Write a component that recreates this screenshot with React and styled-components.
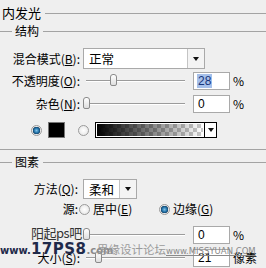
import styled, { createGlobalStyle } from "styled-components";

const Global = createGlobalStyle`
  html, body {
    margin: 0;
    padding: 0;
    background: #efefef;
  }
  body {
    font-family: "Noto Sans CJK SC", "Liberation Sans", sans-serif;
    font-size: 12px;
    color: #000;
  }
`;

const Panel = styled.div`
  position: relative;
  width: 266px;
  height: 268px;
  overflow: hidden;
  background: #efefef;
  display: flex;
  flex-direction: column;
`;

const Header = styled.div`
  display: flex;
  align-items: center;
  height: 14px;
  margin-top: ${(p) => p.$top}px;
  line-height: 14px;
  font-size: ${(p) => p.$size || 12}px;
  &::before {
    content: "";
    width: ${(p) => (p.$indent ? 12 : 0)}px;
    margin-right: ${(p) => (p.$indent ? 3 : 2)}px;
    height: 1px;
    background: #a3a3a3;
  }
  &::after {
    content: "";
    flex: 1;
    height: 1px;
    margin-left: 4px;
    background: #a3a3a3;
  }
`;

const Divider = styled.div`
  height: 1px;
  background: #a3a3a3;
  margin-top: ${(p) => p.$top}px;
`;

const Row = styled.div`
  display: flex;
  align-items: center;
  height: ${(p) => p.$h}px;
  margin-top: ${(p) => p.$top}px;
`;

const Label = styled.div`
  width: ${(p) => p.$w || 80}px;
  margin-right: ${(p) => (p.$gap === undefined ? 3 : p.$gap)}px;
  text-align: right;
  white-space: nowrap;
  line-height: 14px;
  u {
    text-decoration: underline;
  }
`;

const Select = styled.div`
  display: flex;
  width: ${(p) => p.$w}px;
  height: ${(p) => p.$h}px;
  box-sizing: border-box;
  border: 1px solid #a9a9a9;
  background: #fff;
`;

const SelectText = styled.div`
  flex: 1;
  padding-left: 5px;
  display: flex;
  align-items: center;
  font-size: 12.5px;
`;

const SelectArrow = styled.div`
  width: 16px;
  border-left: 1px solid #c4c4c4;
  background: ${(p) => p.$bg || "#f4f4f4"};
  display: flex;
  align-items: center;
  justify-content: center;
  &::after {
    content: "";
    border-left: 3px solid transparent;
    border-right: 3px solid transparent;
    border-top: 4px solid #111;
  }
`;

const Slider = styled.div`
  position: relative;
  width: 104px;
  height: 18px;
  margin-right: 6px;
`;

const Track = styled.div`
  position: absolute;
  left: 3px;
  right: 2px;
  top: 8px;
  height: 1px;
  background: #9b9b9b;
  border-bottom: 1px solid #fff;
`;

const Thumb = styled.div`
  position: absolute;
  top: 2px;
  width: 7px;
  height: 12px;
  box-sizing: border-box;
  border: 1px solid #8a8a8a;
  border-radius: 3px 3px 2px 2px;
  background: linear-gradient(#ffffff, #dedede);
`;

const Field = styled.div`
  width: 37px;
  height: 18px;
  box-sizing: border-box;
  border: 1px solid #a9a9a9;
  background: #fff;
  display: flex;
  align-items: center;
  padding-left: 3px;
  font-family: "Liberation Sans", sans-serif;
  font-size: 12px;
  span {
    background: ${(p) => (p.$selected ? "#a6c0ea" : "transparent")};
    color: ${(p) => (p.$selected ? "#17357a" : "#000")};
    padding: 0 1px;
  }
`;

const Unit = styled.div`
  margin-left: 3px;
  line-height: 14px;
`;

const Radio = styled.div`
  width: 11px;
  height: 11px;
  box-sizing: border-box;
  border-radius: 50%;
  border: 1px solid #9a9a9a;
  background: ${(p) =>
    p.$on
      ? "radial-gradient(circle, #7fc2e8 0, #1f6fa5 2.5px, #16456b 3.5px, #e8e8e8 4px)"
      : "radial-gradient(circle, #ffffff 0, #e2e2e2 100%)"};
  margin-left: ${(p) => p.$left || 0}px;
  flex-shrink: 0;
`;

const Swatch = styled.div`
  width: 17px;
  height: 16px;
  box-sizing: border-box;
  border: 1px solid #777;
  background: #000;
  margin-left: 6px;
`;

const Gradient = styled.div`
  display: flex;
  width: 122px;
  height: 16px;
  box-sizing: border-box;
  border: 1px solid #000;
  margin-left: 6px;
  background: #fff;
`;

const GradientFill = styled.div`
  flex: 1;
  border: 1px solid #fff;
  background:
    linear-gradient(to right, #000, rgba(0, 0, 0, 0)),
    repeating-conic-gradient(#c8c8c8 0 25%, #ffffff 0 50%) 0 0 / 8px 8px;
`;

const GradientArrow = styled(SelectArrow)`
  width: 11px;
  border-left: 1px solid #000;
`;

const RadioText = styled.div`
  margin-left: 3px;
  line-height: 14px;
  width: ${(p) => p.$w || "auto"}px;
`;

const Mark = styled.div`
  position: absolute;
  left: ${(p) => p.$x}px;
  top: ${(p) => p.$y}px;
  white-space: nowrap;
  pointer-events: none;
  line-height: 1;
`;

const MarkPs = styled(Mark)`
  font-size: 13px;
  color: #333;
  letter-spacing: -0.5px;
`;

const MarkSite = styled(Mark)`
  font-family: "DejaVu Sans", sans-serif;
  font-weight: bold;
  color: #1f2a4a;
  font-size: 10px;
  b {
    font-size: 15px;
    letter-spacing: 0.5px;
  }
  i {
    font-style: normal;
    font-size: 10px;
    color: #8a8a8a;
  }
`;

const MarkForum = styled(Mark)`
  color: #9a9a9a;
  font-size: 11.5px;
`;

const MarkMiss = styled(Mark)`
  font-family: "DejaVu Sans", sans-serif;
  color: #8a8a8a;
  font-size: 8.5px;
  text-decoration: underline;
`;

function SliderBox({ value }) {
  return (
    <Slider>
      <Track />
      <Thumb style={{ left: value }} />
    </Slider>
  );
}

export default function App() {
  return (
    <Panel>
      <Global />
      <Header $top={6} $size={13}>
        内发光
      </Header>
      <Header $top={4} $indent>
        结构
      </Header>

      <Row $h={21} $top={10}>
        <Label>
          混合模式(<u>B</u>):
        </Label>
        <Select $w={122} $h={21}>
          <SelectText>正常</SelectText>
          <SelectArrow />
        </Select>
      </Row>

      <Row $h={18} $top={3}>
        <Label>
          不透明度(<u>O</u>):
        </Label>
        <SliderBox value={27} />
        <Field $selected>
          <span>28</span>
        </Field>
        <Unit>%</Unit>
      </Row>

      <Row $h={18} $top={5}>
        <Label>
          杂色(<u>N</u>):
        </Label>
        <SliderBox value={0} />
        <Field>
          <span>0</span>
        </Field>
        <Unit>%</Unit>
      </Row>

      <Row $h={16} $top={9}>
        <Radio $on $left={31} />
        <Swatch />
        <Radio $left={13} />
        <Gradient>
          <GradientFill />
          <GradientArrow $bg="#fff" />
        </Gradient>
      </Row>

      <Divider $top={11} />
      <Header $top={5} $indent>
        图素
      </Header>

      <Row $h={20} $top={10}>
        <Label $w={78} $gap={5}>
          方法(<u>Q</u>):
        </Label>
        <Select $w={54} $h={20}>
          <SelectText>柔和</SelectText>
          <SelectArrow />
        </Select>
      </Row>

      <Row $h={14} $top={3}>
        <Label $w={78} $gap={1}>
          源:
        </Label>
        <Radio />
        <RadioText $w={66}>
          居中(<u>E</u>)
        </RadioText>
        <Radio $on />
        <RadioText>
          边缘(<u>G</u>)
        </RadioText>
      </Row>

      <Row $h={18} $top={10}>
        <Label />
        <SliderBox value={0} />
        <Field>
          <span>0</span>
        </Field>
        <Unit>%</Unit>
      </Row>

      <Row $h={18} $top={5}>
        <Label>
          大小(<u>S</u>):
        </Label>
        <SliderBox value={12} />
        <Field>
          <span>21</span>
        </Field>
        <Unit>像素</Unit>
      </Row>

      <MarkPs $x={31} $y={226}>
        阳起ps吧
      </MarkPs>
      <MarkSite $x={0} $y={242}>
        www.<b>17PS8</b>
        <i>.com</i>
      </MarkSite>
      <MarkForum $x={97} $y={244}>
        思缘设计论坛
      </MarkForum>
      <MarkMiss $x={166} $y={247}>
        www.MISSYUAN.COM
      </MarkMiss>
    </Panel>
  );
}
